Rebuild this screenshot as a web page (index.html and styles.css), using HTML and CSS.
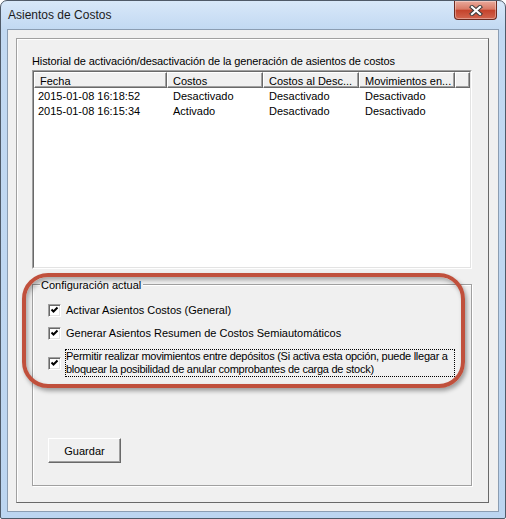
FILE: index.html
```html
<!DOCTYPE html>
<html>
<head>
    <title>Asientos de Costos</title>
    <link rel="stylesheet" href="styles.css">
</head>
<body>
    <div class="window">
        <div class="titlebar">
            <span class="title">Asientos de Costos</span>
            <button class="close" aria-label="Cerrar">
                <svg width="14" height="11" viewBox="0 0 14 11">
                    <path d="M3 2 L11 9 M11 2 L3 9" stroke="#3c3c3c" stroke-width="4.2" stroke-linecap="square" fill="none"/>
                    <path d="M3 2 L11 9 M11 2 L3 9" stroke="#ffffff" stroke-width="2.2" stroke-linecap="square" fill="none"/>
                </svg>
            </button>
        </div>
        <div class="client">
            <div class="panel">
                <div class="caption">Historial de activación/desactivación de la generación de asientos de costos</div>
                <div class="listview">
                    <div class="lv-inner">
                        <div class="lv-header">
                            <div class="hd c1">Fecha</div>
                            <div class="hd c2">Costos</div>
                            <div class="hd c3">Costos al Desc...</div>
                            <div class="hd c4">Movimientos en...</div>
                            <div class="hd filler"></div>
                        </div>
                        <div class="lv-row">
                            <span class="cell c1">2015-01-08 16:18:52</span>
                            <span class="cell c2">Desactivado</span>
                            <span class="cell c3">Desactivado</span>
                            <span class="cell c4">Desactivado</span>
                        </div>
                        <div class="lv-row">
                            <span class="cell c1">2015-01-08 16:15:34</span>
                            <span class="cell c2">Activado</span>
                            <span class="cell c3">Desactivado</span>
                            <span class="cell c4">Desactivado</span>
                        </div>
                    </div>
                </div>
                <div class="group">
                    <div class="legend">Configuración actual</div>
                    <label class="check first">
                        <span class="box"><svg width="9" height="9" viewBox="0 0 9 9"><path d="M1.5 3.5 L3.5 5.5 L7.5 1.5" stroke="#000" stroke-width="2" fill="none"/></svg></span>
                        <span class="label">Activar Asientos Costos (General)</span>
                    </label>
                    <label class="check">
                        <span class="box"><svg width="9" height="9" viewBox="0 0 9 9"><path d="M1.5 3.5 L3.5 5.5 L7.5 1.5" stroke="#000" stroke-width="2" fill="none"/></svg></span>
                        <span class="label">Generar Asientos Resumen de Costos Semiautomáticos</span>
                    </label>
                    <label class="check">
                        <span class="box"><svg width="9" height="9" viewBox="0 0 9 9"><path d="M1.5 3.5 L3.5 5.5 L7.5 1.5" stroke="#000" stroke-width="2" fill="none"/></svg></span>
                        <span class="label focus">Permitir realizar movimientos entre depósitos (Si activa esta opción, puede llegar a<br>bloquear la posibilidad de anular comprobantes de carga de stock)</span>
                    </label>
                    <button class="btn">Guardar</button>
                </div>
            </div>
        </div>
        <!-- marca roja de la captura -->
        <div class="highlight"></div>
    </div>
</body>
</html>
```

FILE: styles.css
```css
body {
    margin: 0;
    font-family: "Liberation Sans", Arial, sans-serif;
    font-size: 11px;
    color: #000;
    background: #fff;
}

.window {
    position: relative;
    width: 506px;
    height: 519px;
    box-sizing: border-box;
    border: 1px solid #4f5a68;
    border-radius: 7px 7px 2px 2px;
    background: linear-gradient(#d8e8f9, #c2d9f2 28px, #bcd5f0);
    overflow: hidden;
}

/* Title bar */
.titlebar {
    display: flex;
    align-items: flex-start;
    height: 28px;
}

.title {
    font-size: 12px;
    line-height: 15px;
    padding: 7px 0 0 7px;
    color: #1b1b1b;
}

.close {
    margin-left: auto;
    margin-right: 8px;
    width: 43px;
    height: 19px;
    padding: 0;
    border: 1px solid #6b2a20;
    border-top: none;
    border-radius: 0 0 4px 4px;
    background: linear-gradient(#e9aa9c, #d87a66 45%, #c4432c 52%, #d2654f);
    box-shadow: inset 0 0 0 1px rgba(255, 255, 255, 0.35);
    display: flex;
    align-items: center;
    justify-content: center;
}

/* Client area */
.client {
    margin: 0 6px;
    height: 483px;
    box-sizing: border-box;
    border: 1px solid #8b9db2;
    background: #f0f0f0;
    padding: 8px;
}

.panel {
    width: 473px;
    height: 465px;
    box-sizing: border-box;
    border: 1px solid;
    border-color: #a0a0a0 #696969 #696969 #a0a0a0;
    box-shadow: inset 1px 1px 0 #fff;
    padding: 16px 0 0 15px;
}

.caption {
    line-height: 13px;
    margin-bottom: 2px;
    white-space: nowrap;
    letter-spacing: -0.1px;
}

/* List view */
.listview {
    width: 440px;
    height: 199px;
    box-sizing: border-box;
    border: 1px solid;
    border-color: #a0a0a0 #fff #fff #a0a0a0;
}

.lv-inner {
    height: 100%;
    box-sizing: border-box;
    border: 1px solid;
    border-color: #696969 #e3e3e3 #e3e3e3 #696969;
    background: #fff;
}

.lv-header {
    display: flex;
    height: 16px;
}

.hd {
    box-sizing: border-box;
    height: 16px;
    border: 1px solid;
    border-color: #fff #696969 #696969 #fff;
    box-shadow: inset -1px -1px 0 #a0a0a0;
    background: #f0f0f0;
    padding: 2px 0 0 5px;
    line-height: 13px;
    white-space: nowrap;
}

.c1 { width: 133px; }
.c2, .c3, .c4 { width: 96px; }
.filler { width: 15px; }

.lv-row {
    display: flex;
    height: 15px;
    line-height: 16px;
}

.cell {
    box-sizing: border-box;
    padding-left: 6px;
    white-space: nowrap;
}

.cell.c1 {
    padding-left: 4px;
}

/* Group box */
.group {
    width: 440px;
    height: 202px;
    margin-top: 15px;
    box-sizing: border-box;
    border: 1px solid #a0a0a0;
    box-shadow: 1px 1px 0 #fff, inset 1px 1px 0 #fff;
    padding-left: 15px;
}

.legend {
    width: fit-content;
    margin: -6px 0 0 -8px;
    padding: 0 2px 0 1px;
    line-height: 13px;
    background: #f0f0f0;
}

.check {
    display: flex;
    align-items: center;
    margin-top: 8px;
}

.check.first {
    margin-top: 11px;
}

.box {
    width: 13px;
    height: 13px;
    box-sizing: border-box;
    border: 1px solid;
    border-color: #a0a0a0 #fff #fff #a0a0a0;
    box-shadow: inset 1px 1px 0 #696969, inset -1px -1px 0 #e3e3e3;
    background: #fff;
    display: flex;
    align-items: center;
    justify-content: center;
}

.label {
    margin-left: 4px;
    border: 1px dotted transparent;
    line-height: 13px;
    white-space: nowrap;
}

.label.focus {
    width: 390px;
    box-sizing: border-box;
    border-color: #000;
    letter-spacing: -0.26px;
}

.btn {
    display: block;
    margin-top: 61px;
    width: 73px;
    height: 25px;
    padding: 0;
    font-family: inherit;
    font-size: 11px;
    color: #000;
    background: #f0f0f0;
    border: 1px solid;
    border-color: #fff #696969 #696969 #fff;
    box-shadow: inset -1px -1px 0 #a0a0a0;
}

/* Red annotation drawn over the screenshot */
.highlight {
    position: absolute;
    left: 21px;
    top: 272px;
    width: 443px;
    height: 115px;
    box-sizing: border-box;
    border: 4px solid #c0503c;
    border-radius: 26px;
    box-shadow: 2px 3px 4px rgba(0, 0, 0, 0.35), inset 2px 3px 4px rgba(0, 0, 0, 0.3);
}
```
